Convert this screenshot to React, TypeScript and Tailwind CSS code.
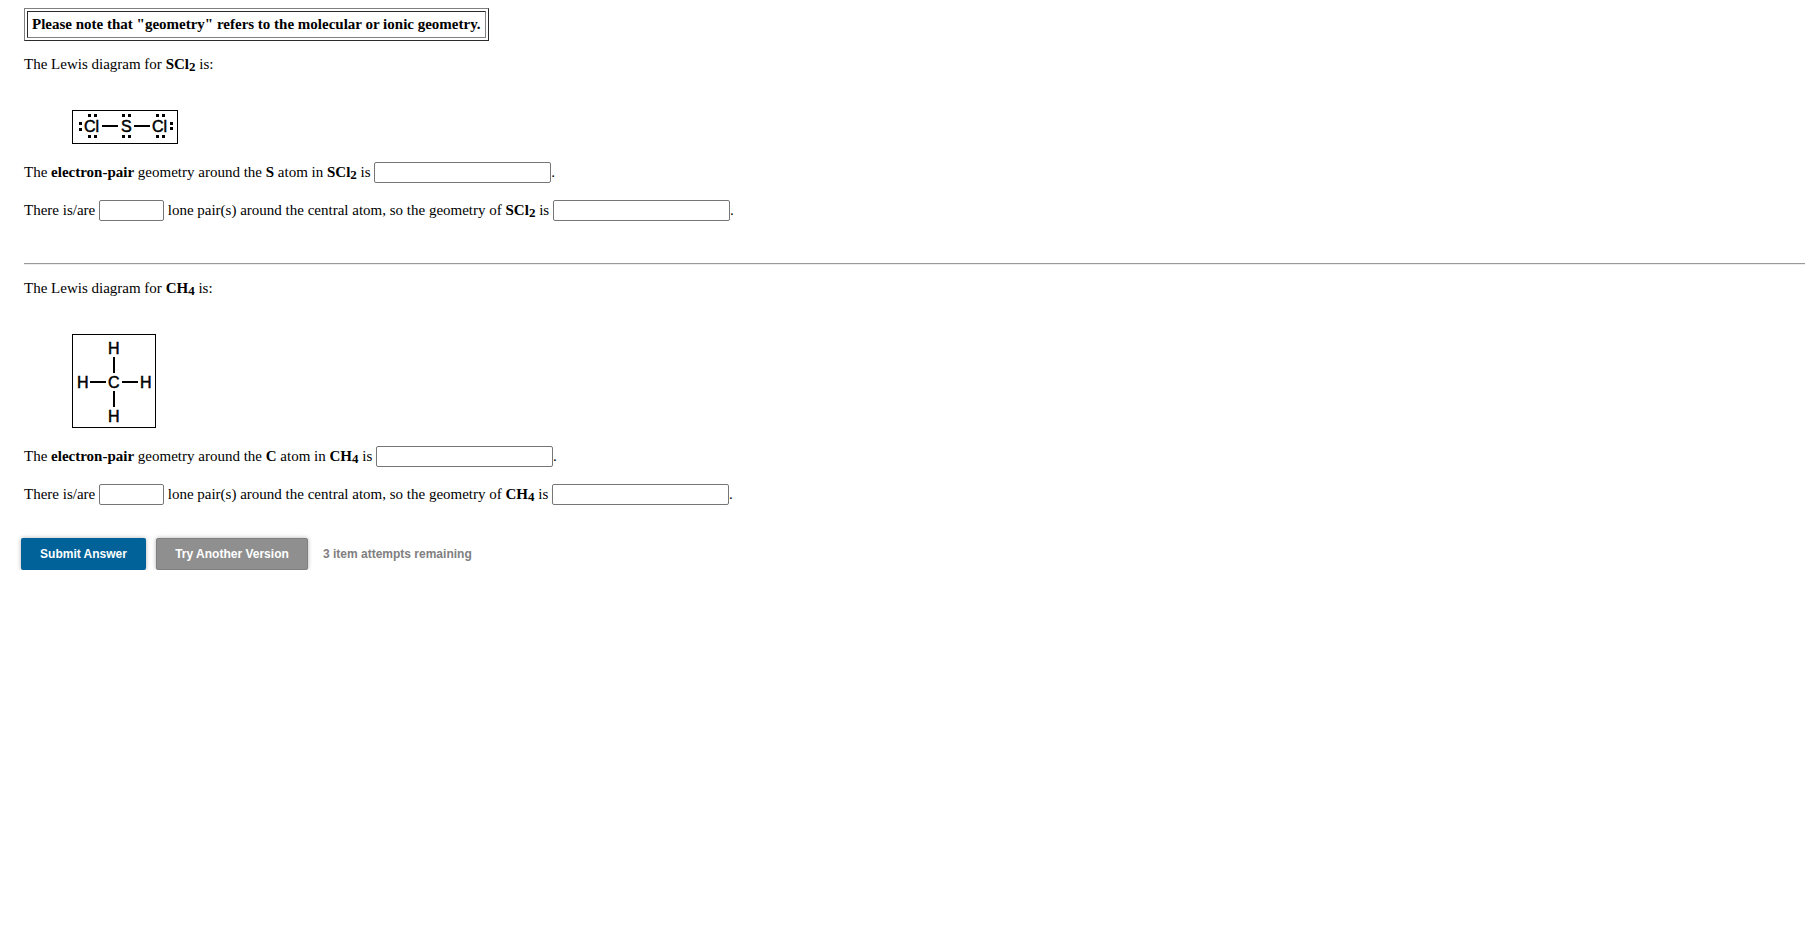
import type { ReactNode } from "react";

const atomClass = "fill-black stroke-black font-['Liberation_Sans',Arial,sans-serif] text-[16px]";

function Formula({ base, count }: { base: string; count: number }) {
  return (
    <b>
      {base}
      <sub className="-bottom-0.5 text-[13px]">{count}</sub>
    </b>
  );
}

function Blank({ label, short = false }: { label: string; short?: boolean }) {
  return (
    <input
      type="text"
      aria-label={label}
      className={`h-[21px] rounded-[2px] border border-[#767676] bg-white px-1 pt-0.5 align-baseline text-[13px] ${
        short ? "w-[65px]" : "w-[177px]"
      }`}
    />
  );
}

function Dots({ points }: { points: [number, number][] }) {
  return (
    <>
      {points.map(([x, y]) => (
        <rect key={`${x}-${y}`} x={x} y={y} width="3" height="3" />
      ))}
    </>
  );
}

function SulfurDichloride() {
  return (
    <svg width="106" height="34" viewBox="0 0 106 34" role="img" aria-label="Lewis diagram of SCl2" shapeRendering="crispEdges">
      <rect x="0.5" y="0.5" width="105" height="33" fill="white" stroke="black" />
      <g className={atomClass} strokeWidth="0.5">
        <text x="12" y="22">Cl</text>
        <text x="49" y="22">S</text>
        <text x="80" y="22">Cl</text>
      </g>
      <path d="M30 16H46M62 16H78" stroke="black" strokeWidth="2" />
      <Dots
        points={[
          [16, 4], [22, 4], [16, 25], [22, 25], [7, 12], [7, 18],
          [50, 4], [56, 4], [50, 25], [56, 25],
          [84, 4], [90, 4], [84, 25], [90, 25], [98, 12], [98, 17],
        ]}
      />
    </svg>
  );
}

function Methane() {
  return (
    <svg width="84" height="94" viewBox="0 0 84 94" role="img" aria-label="Lewis diagram of CH4" shapeRendering="crispEdges">
      <rect x="0.5" y="0.5" width="83" height="93" fill="white" stroke="black" />
      <g className={atomClass} strokeWidth="0.5">
        <text x="36" y="20">H</text>
        <text x="5" y="54">H</text>
        <text x="36" y="54">C</text>
        <text x="68" y="54">H</text>
        <text x="36" y="88">H</text>
      </g>
      <path d="M42 23V39M42 57V73M18 48H34M50 48H66" stroke="black" strokeWidth="2" />
    </svg>
  );
}

type QuestionProps = { base: string; count: number; atom: string; children: ReactNode };

function Question({ base, count, atom, children }: QuestionProps) {
  const name = `${base}${count}`;
  return (
    <section>
      <p>
        The Lewis diagram for <Formula base={base} count={count} /> is:
      </p>
      <div className="mt-[35px] ml-12 [&>svg]:block">{children}</div>
      <p className="mt-[17px]">
        The <b>electron-pair</b> geometry around the <b>{atom}</b> atom in <Formula base={base} count={count} /> is{" "}
        <Blank label={`Electron-pair geometry of ${name}`} />.
      </p>
      <p className="mt-4">
        There is/are <Blank label={`Lone pairs in ${name}`} short /> lone pair(s) around the central atom, so the
        geometry of <Formula base={base} count={count} /> is <Blank label={`Geometry of ${name}`} />.
      </p>
    </section>
  );
}

export default function App() {
  return (
    <main className="bg-white pt-2 pl-6 font-['Liberation_Serif','Times_New_Roman',serif] text-[15px] leading-[22px] text-black">
      <div className="w-fit border border-t-[#808080] border-r-[#2b2b2b] border-b-[#2b2b2b] border-l-[#808080] p-[2px]">
        <p className="border border-t-[#2b2b2b] border-r-[#808080] border-b-[#808080] border-l-[#2b2b2b] px-1 pt-px pb-[2px] font-bold">
          Please note that "geometry" refers to the molecular or ionic geometry.
        </p>
      </div>
      <div className="mt-3">
        <Question base="SCl" count={2} atom="S">
          <SulfurDichloride />
        </Question>
      </div>
      <hr className="mt-[42px] mb-3 border-t border-b border-t-[#9a9a9a] border-b-[#eeeeee]" />
      <Question base="CH" count={4} atom="C">
        <Methane />
      </Question>
      <div className="mt-[33px] -ml-[3px] flex items-center font-['Liberation_Sans',Arial,sans-serif] text-xs font-bold">
        <button type="button" className="h-8 w-[125px] rounded-[2px] bg-[#006298] text-white shadow-[0_0_4px_rgba(0,0,0,0.3)]">
          Submit Answer
        </button>
        <button
          type="button"
          className="ml-[10px] h-8 w-[152px] rounded-[2px] border border-[#808080] bg-[#8f8f8f] text-white shadow-[0_0_4px_rgba(0,0,0,0.3)]"
        >
          Try Another Version
        </button>
        <span className="ml-[15px] text-[#808080]">3 item attempts remaining</span>
      </div>
    </main>
  );
}
